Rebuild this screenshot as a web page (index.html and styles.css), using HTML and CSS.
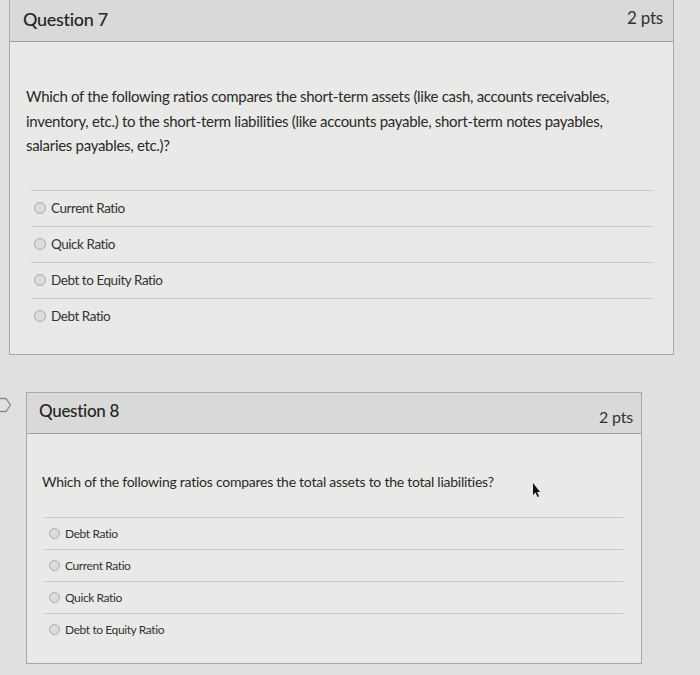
FILE: index.html
```html
<!DOCTYPE html>
<html>
<head>
<meta charset="utf-8">
<link rel="stylesheet" href="styles.css">
</head>
<body>
<div class="page">
  <section class="card q7">
    <header class="card-head">
      <h2 class="q-title">Question 7</h2>
      <span class="pts">2 pts</span>
    </header>
    <div class="card-body">
      <p class="q-text">Which of the following ratios compares the short-term assets (like cash, accounts receivables, inventory, etc.) to the short-term liabilities (like accounts payable, short-term notes payables, salaries payables, etc.)?</p>
      <ul class="answers">
        <li class="answer"><span class="radio"></span>Current Ratio</li>
        <li class="answer"><span class="radio"></span>Quick Ratio</li>
        <li class="answer"><span class="radio"></span>Debt to Equity Ratio</li>
        <li class="answer"><span class="radio"></span>Debt Ratio</li>
      </ul>
    </div>
  </section>

  <section class="card q8">
    <svg class="flag" width="12" height="16" viewBox="0 0 12 16"><path d="M-2 1.5 H6 L10.5 8 L6 14.5 H-2" fill="none" stroke="#8a8a88" stroke-width="1.3"/></svg>
    <header class="card-head">
      <h2 class="q-title">Question 8</h2>
      <span class="pts">2 pts</span>
    </header>
    <div class="card-body">
      <p class="q-text">Which of the following ratios compares the total assets to the total liabilities?</p>
      <ul class="answers">
        <li class="answer"><span class="radio"></span>Debt Ratio</li>
        <li class="answer"><span class="radio"></span>Current Ratio</li>
        <li class="answer"><span class="radio"></span>Quick Ratio</li>
        <li class="answer"><span class="radio"></span>Debt to Equity Ratio</li>
      </ul>
    </div>
    <svg class="cursor" width="10" height="16" viewBox="0 0 10 16"><path d="M2 1 L2 13 L4.5 10.5 L6.5 15 L8 14.3 L6 10 L9 10 Z" fill="#111"/></svg>
  </section>
</div>
</body>
</html>
```

FILE: styles.css
```css
* { box-sizing: border-box; }
html, body {
  margin: 0;
  padding: 0;
  background: #e0e0de;
  font-family: Lato, "Open Sans", "Liberation Sans", sans-serif;
  color: #2d2d2d;
}
.page {
  width: 700px;
  height: 675px;
  overflow: hidden;
  display: flex;
  flex-direction: column;
}
.card {
  position: relative;
  border: 1px solid #a9a9a7;
  background: #e9e9e7;
}
.q7 {
  margin: -1px 0 0 9px;
  width: 665px;
  height: 356px;
}
.q8 {
  margin: 37px 0 0 26px;
  width: 616px;
  height: 272px;
}
.card-head {
  display: flex;
  justify-content: space-between;
  align-items: center;
  background: #d9d9d7;
  border-bottom: 1px solid #a3a3a1;
}
.q7 .card-head {
  height: 42px;
  padding: 0 10px 4px 13px;
}
.q8 .card-head {
  height: 41px;
  padding: 0 8px 0 12px;
}
.q-title {
  margin: 0;
  font-weight: 500;
  font-size: 18px;
  letter-spacing: -0.3px;
  color: #262626;
}
.q8 .q-title { font-size: 17px; margin-top: -6px; }
.pts {
  font-size: 17px;
  letter-spacing: -0.2px;
  color: #333;
}
.q7 .pts { margin-top: -2px; }
.q8 .pts { font-size: 16px; margin-top: 6px; }
.q-text {
  margin: 0;
  font-size: 15px;
  line-height: 24.5px;
  letter-spacing: -0.3px;
  color: #2a2a2a;
}
.q7 .q-text {
  padding: 42px 40px 0 16px;
}
.q8 .q-text {
  padding: 36px 40px 0 15px;
  font-size: 14px;
  letter-spacing: -0.25px;
}
.answers {
  list-style: none;
  margin: 0;
  padding: 0;
}
.q7 .answers { margin: 32px 20px 0 21px; }
.q8 .answers { margin: 22px 18px 0 17px; }
.answer {
  display: flex;
  align-items: center;
  border-top: 1px solid #c8c8c6;
  color: #333;
}
.q7 .answer {
  height: 36px;
  font-size: 13.5px;
  letter-spacing: -0.45px;
  padding-left: 3px;
}
.q8 .answer {
  height: 32px;
  font-size: 12px;
  letter-spacing: -0.4px;
  padding-left: 5px;
  padding-top: 1px;
}
.radio {
  width: 12px;
  height: 12px;
  border-radius: 50%;
  border: 1px solid #a9a9a7;
  background: #dcdcda;
  margin-right: 5px;
  flex: none;
}
.q8 .radio { width: 11px; height: 11px; margin-right: 5px; }
.flag {
  position: absolute;
  left: -27px;
  top: 4px;
}
.cursor {
  position: absolute;
  left: 504px;
  top: 89px;
}
```
